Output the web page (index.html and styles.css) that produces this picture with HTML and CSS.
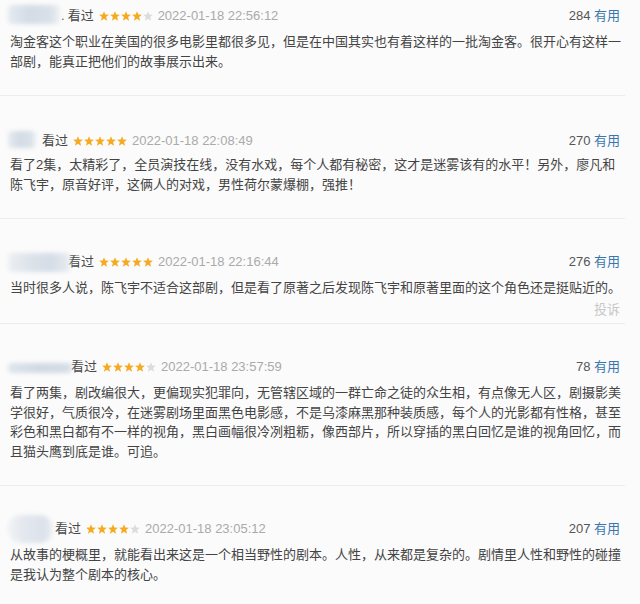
FILE: index.html
```html
<!DOCTYPE html>
<html lang="zh-CN">
<head>
<meta charset="utf-8">
<title>短评</title>
<link rel="stylesheet" href="styles.css">
</head>
<body>
<div class="list">
  <div class="review review--first">
    <div class="head">
      <span class="blur blur--r1"></span>
      <span class="dot">.</span>
      <span class="watched">看过</span>
      <svg class="stars" viewBox="0 0 54 11" width="54" height="11"><g class="on"><polygon points="5,0.3 6.3,3.6 9.9,3.8 7.1,6.1 8.1,9.7 5,7.7 1.9,9.7 2.9,6.1 0.1,3.8 3.7,3.6"/><polygon transform="translate(11 0)" points="5,0.3 6.3,3.6 9.9,3.8 7.1,6.1 8.1,9.7 5,7.7 1.9,9.7 2.9,6.1 0.1,3.8 3.7,3.6"/><polygon transform="translate(22 0)" points="5,0.3 6.3,3.6 9.9,3.8 7.1,6.1 8.1,9.7 5,7.7 1.9,9.7 2.9,6.1 0.1,3.8 3.7,3.6"/><polygon transform="translate(33 0)" points="5,0.3 6.3,3.6 9.9,3.8 7.1,6.1 8.1,9.7 5,7.7 1.9,9.7 2.9,6.1 0.1,3.8 3.7,3.6"/></g><g class="off"><polygon transform="translate(44 0)" points="5,0.3 6.3,3.6 9.9,3.8 7.1,6.1 8.1,9.7 5,7.7 1.9,9.7 2.9,6.1 0.1,3.8 3.7,3.6"/></g></svg>
      <span class="time">2022-01-18 22:56:12</span>
      <span class="votes">284 <a class="useful">有用</a></span>
    </div>
    <p class="text">淘金客这个职业在美国的很多电影里都很多见，但是在中国其实也有着这样的一批淘金客。很开心有这样一部剧，能真正把他们的故事展示出来。</p>
  </div>

  <div class="review">
    <div class="head head--r2">
      <span class="blur blur--r2"></span>
      <span class="watched">看过</span>
      <svg class="stars" viewBox="0 0 54 11" width="54" height="11"><g class="on"><polygon points="5,0.3 6.3,3.6 9.9,3.8 7.1,6.1 8.1,9.7 5,7.7 1.9,9.7 2.9,6.1 0.1,3.8 3.7,3.6"/><polygon transform="translate(11 0)" points="5,0.3 6.3,3.6 9.9,3.8 7.1,6.1 8.1,9.7 5,7.7 1.9,9.7 2.9,6.1 0.1,3.8 3.7,3.6"/><polygon transform="translate(22 0)" points="5,0.3 6.3,3.6 9.9,3.8 7.1,6.1 8.1,9.7 5,7.7 1.9,9.7 2.9,6.1 0.1,3.8 3.7,3.6"/><polygon transform="translate(33 0)" points="5,0.3 6.3,3.6 9.9,3.8 7.1,6.1 8.1,9.7 5,7.7 1.9,9.7 2.9,6.1 0.1,3.8 3.7,3.6"/><polygon transform="translate(44 0)" points="5,0.3 6.3,3.6 9.9,3.8 7.1,6.1 8.1,9.7 5,7.7 1.9,9.7 2.9,6.1 0.1,3.8 3.7,3.6"/></g></svg>
      <span class="time">2022-01-18 22:08:49</span>
      <span class="votes">270 <a class="useful">有用</a></span>
    </div>
    <p class="text">看了2集，太精彩了，全员演技在线，没有水戏，每个人都有秘密，这才是迷雾该有的水平！另外，廖凡和陈飞宇，原音好评，这俩人的对戏，男性荷尔蒙爆棚，强推！</p>
  </div>

  <div class="review review--report">
    <div class="head">
      <span class="blur blur--r3"></span>
      <span class="watched">看过</span>
      <svg class="stars" viewBox="0 0 54 11" width="54" height="11"><g class="on"><polygon points="5,0.3 6.3,3.6 9.9,3.8 7.1,6.1 8.1,9.7 5,7.7 1.9,9.7 2.9,6.1 0.1,3.8 3.7,3.6"/><polygon transform="translate(11 0)" points="5,0.3 6.3,3.6 9.9,3.8 7.1,6.1 8.1,9.7 5,7.7 1.9,9.7 2.9,6.1 0.1,3.8 3.7,3.6"/><polygon transform="translate(22 0)" points="5,0.3 6.3,3.6 9.9,3.8 7.1,6.1 8.1,9.7 5,7.7 1.9,9.7 2.9,6.1 0.1,3.8 3.7,3.6"/><polygon transform="translate(33 0)" points="5,0.3 6.3,3.6 9.9,3.8 7.1,6.1 8.1,9.7 5,7.7 1.9,9.7 2.9,6.1 0.1,3.8 3.7,3.6"/><polygon transform="translate(44 0)" points="5,0.3 6.3,3.6 9.9,3.8 7.1,6.1 8.1,9.7 5,7.7 1.9,9.7 2.9,6.1 0.1,3.8 3.7,3.6"/></g></svg>
      <span class="time">2022-01-18 22:16:44</span>
      <span class="votes">276 <a class="useful">有用</a></span>
    </div>
    <p class="text">当时很多人说，陈飞宇不适合这部剧，但是看了原著之后发现陈飞宇和原著里面的这个角色还是挺贴近的。</p>
    <div class="report">投诉</div>
  </div>

  <div class="review">
    <div class="head">
      <span class="blur blur--r4"></span>
      <span class="watched">看过</span>
      <svg class="stars" viewBox="0 0 54 11" width="54" height="11"><g class="on"><polygon points="5,0.3 6.3,3.6 9.9,3.8 7.1,6.1 8.1,9.7 5,7.7 1.9,9.7 2.9,6.1 0.1,3.8 3.7,3.6"/><polygon transform="translate(11 0)" points="5,0.3 6.3,3.6 9.9,3.8 7.1,6.1 8.1,9.7 5,7.7 1.9,9.7 2.9,6.1 0.1,3.8 3.7,3.6"/><polygon transform="translate(22 0)" points="5,0.3 6.3,3.6 9.9,3.8 7.1,6.1 8.1,9.7 5,7.7 1.9,9.7 2.9,6.1 0.1,3.8 3.7,3.6"/><polygon transform="translate(33 0)" points="5,0.3 6.3,3.6 9.9,3.8 7.1,6.1 8.1,9.7 5,7.7 1.9,9.7 2.9,6.1 0.1,3.8 3.7,3.6"/></g><g class="off"><polygon transform="translate(44 0)" points="5,0.3 6.3,3.6 9.9,3.8 7.1,6.1 8.1,9.7 5,7.7 1.9,9.7 2.9,6.1 0.1,3.8 3.7,3.6"/></g></svg>
      <span class="time">2022-01-18 23:57:59</span>
      <span class="votes">78 <a class="useful">有用</a></span>
    </div>
    <p class="text">看了两集，剧改编很大，更偏现实犯罪向，无管辖区域的一群亡命之徒的众生相，有点像无人区，剧摄影美学很好，气质很冷，在迷雾剧场里面黑色电影感，不是乌漆麻黑那种装质感，每个人的光影都有性格，甚至彩色和黑白都有不一样的视角，黑白画幅很冷冽粗粝，像西部片，所以穿插的黑白回忆是谁的视角回忆，而且猫头鹰到底是谁。可追。</p>
  </div>

  <div class="review review--last">
    <div class="head">
      <span class="blur blur--r5"></span>
      <span class="watched">看过</span>
      <svg class="stars" viewBox="0 0 54 11" width="54" height="11"><g class="on"><polygon points="5,0.3 6.3,3.6 9.9,3.8 7.1,6.1 8.1,9.7 5,7.7 1.9,9.7 2.9,6.1 0.1,3.8 3.7,3.6"/><polygon transform="translate(11 0)" points="5,0.3 6.3,3.6 9.9,3.8 7.1,6.1 8.1,9.7 5,7.7 1.9,9.7 2.9,6.1 0.1,3.8 3.7,3.6"/><polygon transform="translate(22 0)" points="5,0.3 6.3,3.6 9.9,3.8 7.1,6.1 8.1,9.7 5,7.7 1.9,9.7 2.9,6.1 0.1,3.8 3.7,3.6"/><polygon transform="translate(33 0)" points="5,0.3 6.3,3.6 9.9,3.8 7.1,6.1 8.1,9.7 5,7.7 1.9,9.7 2.9,6.1 0.1,3.8 3.7,3.6"/></g><g class="off"><polygon transform="translate(44 0)" points="5,0.3 6.3,3.6 9.9,3.8 7.1,6.1 8.1,9.7 5,7.7 1.9,9.7 2.9,6.1 0.1,3.8 3.7,3.6"/></g></svg>
      <span class="time">2022-01-18 23:05:12</span>
      <span class="votes">207 <a class="useful">有用</a></span>
    </div>
    <p class="text">从故事的梗概里，就能看出来这是一个相当野性的剧本。人性，从来都是复杂的。剧情里人性和野性的碰撞是我认为整个剧本的核心。</p>
  </div>
</div>
</body>
</html>
```

FILE: styles.css
```css
html, body {
  margin: 0;
  padding: 0;
  background: #fbfbfb;
}

body {
  width: 640px;
  height: 604px;
  overflow: hidden;
  font-family: "Liberation Sans", "Noto Sans CJK SC", sans-serif;
  font-size: 13px;
  color: #444;
}

.list {
  display: flex;
  flex-direction: column;
}

.review {
  width: 615px;
  padding: 33px 0 24px 10px;
  border-bottom: 1px solid #ececec;
}

.review--first {
  padding-top: 6px;
}

.review--report {
  padding-bottom: 4px;
}

.review--last {
  border-bottom: none;
}

.head {
  display: flex;
  align-items: center;
  height: 20px;
  line-height: 20px;
  margin-left: -2px;
  padding-right: 5px;
}

.head--r2 {
  margin-top: 2px;
  margin-bottom: -2px;
}

.blur {
  display: block;
  flex: none;
  z-index: 1;
  border-radius: 4px;
  background: linear-gradient(90deg, #e6ebf1 0%, #d3dbe5 40%, #d9e0e8 80%, #eef1f4 100%);
  filter: blur(2px);
}

.blur--r1 { width: 52px; height: 19px; margin-top: -3px; }
.blur--r2 { width: 28px; height: 17px; margin: 0 6px 0 0; margin-top: -3px; }
.blur--r3 { width: 62px; height: 19px; margin-right: -2px; background: linear-gradient(90deg, #eceff3 0%, #dde3ea 35%, #d4dce6 70%, #e9edf1 100%); }
.blur--r4 { width: 64px; height: 10px; margin-top: 2px; margin-right: -1px; background: linear-gradient(90deg, #dfe5ec 0%, #cfd8e3 50%, #d4dce5 90%, #dfe3e8 100%); }
.blur--r5 { width: 45px; height: 28px; margin-right: 2px; border-radius: 13px; background: linear-gradient(90deg, #f0f2f5 0%, #e2e7ee 40%, #dce2ea 80%, #eceff3 100%); }

.dot {
  color: #555;
  margin: 0 3px 0 1px;
}

.watched {
  color: #494949;
}

.stars {
  display: block;
  flex: none;
  margin: 0 5px 0 5px;
}

.stars .on { fill: #f5aa22; }
.stars .off { fill: #dcdcdc; }

.time {
  color: #aaa;
}

.votes {
  margin-left: auto;
  color: #555;
}

.useful {
  color: #3a77ad;
}

.text {
  margin: 6px 0 0;
  line-height: 19.5px;
  color: #444;
}

.report {
  text-align: right;
  line-height: 19.5px;
  margin-top: 2px;
  padding-right: 5px;
  color: #c8c8c8;
}
```
